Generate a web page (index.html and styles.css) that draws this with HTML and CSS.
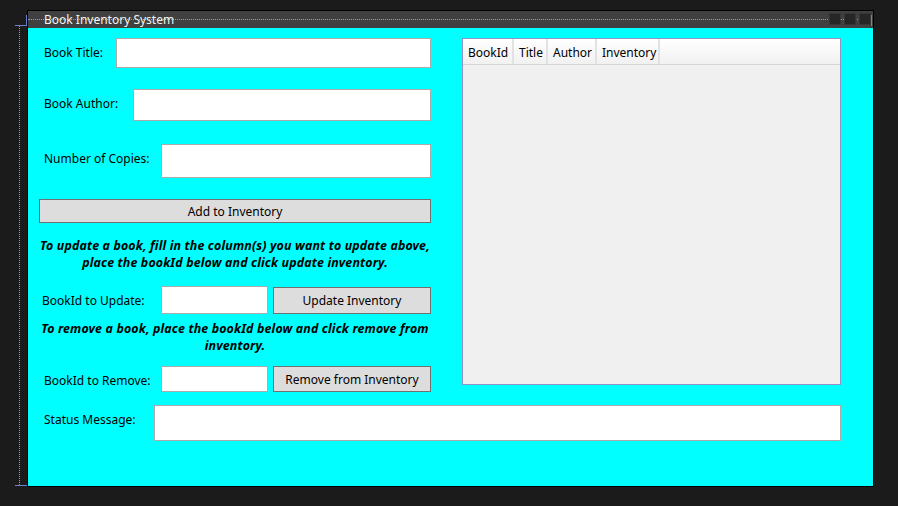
FILE: index.html
```html
<!DOCTYPE html>
<html>
<head>
<meta charset="utf-8">
<link rel="stylesheet" href="styles.css">
</head>
<body>
<div class="adorner-v"></div>
<div class="adorner-top"></div>
<div class="adorner-top-v"></div>
<div class="adorner-bot"></div>
<div class="window">
  <div class="titlebar">
    <div class="title-dots"></div>
    <span class="title">Book Inventory System</span>
    <div class="title-btns"><span></span><span></span><span></span></div>
    <div class="title-edge"></div>
  </div>
  <div class="client">
    <div class="main">
      <div class="left">
        <div class="row r1"><label class="lbl">Book Title:</label><div class="input w-title"></div></div>
        <div class="row r2"><label class="lbl">Book Author:</label><div class="input w-author"></div></div>
        <div class="row r3"><label class="lbl">Number of Copies:</label><div class="input w-copies"></div></div>
        <button class="btn btn-add">Add to Inventory</button>
        <p class="note note-update">To update a book, fill in the column(s) you want to update above,<br>place the bookId below and click update inventory.</p>
        <div class="row r4"><label class="lbl lbl-upd">BookId to Update:</label><div class="input w-id"></div><button class="btn btn-side">Update Inventory</button></div>
        <p class="note note-remove">To remove a book, place the bookId below and click remove from<br>inventory.</p>
        <div class="row r5"><label class="lbl">BookId to Remove:</label><div class="input w-id"></div><button class="btn btn-side">Remove from Inventory</button></div>
      </div>
      <div class="datagrid">
        <div class="dg-header">
          <div class="dg-col c1">BookId</div>
          <div class="dg-col c2">Title</div>
          <div class="dg-col c3">Author</div>
          <div class="dg-col c4">Inventory</div>
        </div>
        <div class="dg-body"></div>
      </div>
    </div>
    <div class="row status"><label class="lbl">Status Message:</label><div class="input w-status"></div></div>
  </div>
</div>
</body>
</html>
```

FILE: styles.css
```css
* { box-sizing: border-box; }
html, body { margin: 0; padding: 0; }
body {
  background: #1b1b1b;
  width: 898px;
  height: 506px;
  overflow: hidden;
  position: relative;
  font-family: "Noto Sans", "Open Sans", sans-serif;
  font-size: 12px;
}
.adorner-v {
  position: absolute; left: 19px; top: 26px; height: 459px; width: 0;
  border-left: 1px dotted #8b9bd6;
}
.adorner-top {
  position: absolute; left: 15px; top: 25px; width: 12px; height: 1px; background: #6f7fd0;
}
.adorner-top-v {
  position: absolute; left: 26px; top: 15px; width: 1px; height: 10px; background: #6f7fd0;
}
.adorner-bot {
  position: absolute; left: 15px; top: 485px; width: 12px; height: 1px; background: #6f7fd0;
}
.window {
  margin: 10px 0 0 27px;
  width: 847px;
  height: 477px;
  border: 1px solid #000;
  display: flex;
  flex-direction: column;
}
.titlebar {
  height: 17px;
  background: #404040;
  position: relative;
  display: flex;
  align-items: center;
}
.title-dots {
  position: absolute; left: 0; right: 3px; top: 8px; height: 0;
  border-top: 1px dotted #8b9bd6;
}
.title {
  position: relative;
  margin-left: 16px;
  color: #f4f4f4;
  font-size: 12px;
  line-height: 17px;
}
.title-btns {
  position: absolute; right: 2px; top: 2px;
  display: flex; gap: 3px;
}
.title-btns span {
  width: 12px; height: 12px; background: #262626; border: 1px solid #363636;
}
.title-edge {
  position: absolute; right: 1px; top: 4px; width: 1px; height: 11px; background: #6f7fd0;
}
.client {
  flex: 1;
  background: #00ffff;
  padding: 10px 0 0 11px;
}
.main {
  display: flex;
  gap: 31px;
  align-items: flex-start;
}
.left {
  width: 392px;
  display: flex;
  flex-direction: column;
}
.row {
  display: flex;
  align-items: flex-start;
}
.lbl {
  padding-left: 5px;
  margin-top: 7px;
  line-height: 16px;
  color: #000;
  white-space: nowrap;
  flex: 1;
}
.lbl-upd { padding-left: 3px; }
.input {
  background: #fff;
  border: 1px solid #ababab;
  height: 100%;
}
.r1 { height: 30px; }
.r2 { height: 32px; margin-top: 21px; }
.r3 { height: 34px; margin-top: 23px; }
.w-title { width: 315px; }
.w-author { width: 298px; }
.w-copies { width: 270px; }
.btn {
  font-family: inherit;
  font-size: 12px;
  color: #000;
  background: #dddddd;
  border: 1px solid #707070;
  padding: 0;
  margin: 0;
}
.btn-add { height: 24px; margin-top: 21px; width: 392px; }
.note {
  margin: 0;
  font-weight: bold;
  font-style: italic;
  font-size: 12.4px;
  letter-spacing: 0.15px;
  text-align: center;
  line-height: 17px;
  white-space: nowrap;
  color: #000;
}
.note-update { margin-top: 14px; }
.r4 { height: 28px; margin-top: 15px; }
.w-id { width: 107px; }
.btn-side { width: 158px; height: 100%; margin-left: 5px; }
.r4 .btn-side { height: 27px; align-self: flex-end; }
.note-remove { margin-top: 6px; }
.r5 { height: 26px; margin-top: 12px; }
.datagrid {
  width: 379px;
  height: 347px;
  border: 1px solid #8e95c4;
  background: #f0f0f0;
  display: flex;
  flex-direction: column;
}
.dg-header {
  height: 26px;
  display: flex;
  background: linear-gradient(#ffffff, #f1f1f2);
  border-bottom: 1px solid #d5d5d5;
}
.dg-col {
  height: 100%;
  padding-left: 5px;
  padding-top: 1px;
  display: flex;
  align-items: center;
  border-right: 2px solid #e2e2e2;
  color: #000;
  white-space: nowrap;
}
.c1 { width: 51px; }
.c2 { width: 34px; }
.c3 { width: 49px; }
.c4 { width: 63px; }
.dg-body { flex: 1; }
.status { height: 36px; margin-top: 13px; width: 802px; }
.w-status { width: 687px; }
```
